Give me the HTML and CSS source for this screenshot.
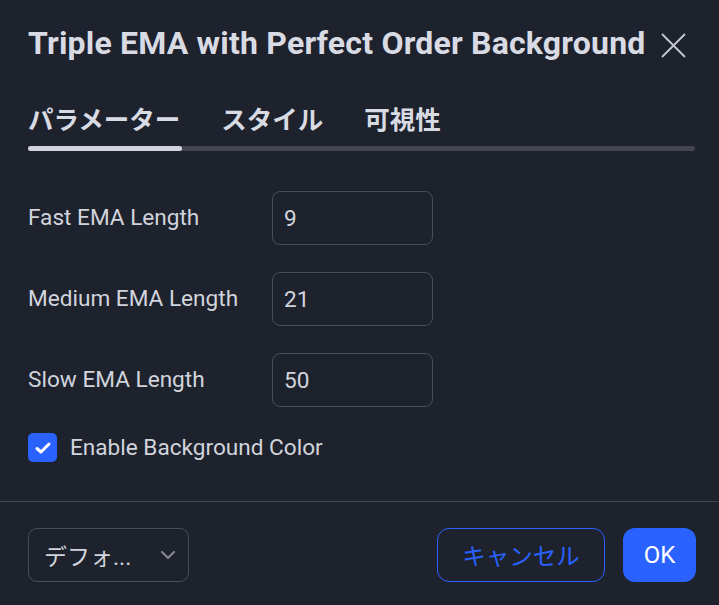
FILE: index.html
```html
<!DOCTYPE html>
<html lang="ja">
<head>
<meta charset="utf-8">
<title>Triple EMA with Perfect Order Background</title>
<link rel="stylesheet" href="styles.css">
</head>
<body>
<div class="dialog">
  <div class="header">
    <div class="title">Triple EMA with Perfect Order Background</div>
    <button class="close" aria-label="閉じる">
      <svg width="25" height="25" viewBox="0 0 25 25"><path d="M1 1L24 24M24 1L1 24" stroke="currentColor" stroke-width="1.8" fill="none"/></svg>
    </button>
  </div>
  <div class="tabs">
    <div class="tab active">パラメーター</div>
    <div class="tab">スタイル</div>
    <div class="tab">可視性</div>
  </div>
  <div class="track"><div class="track-fill"></div></div>
  <div class="fields">
    <label class="label">Fast EMA Length</label>
    <div class="input">9</div>
    <label class="label">Medium EMA Length</label>
    <div class="input">21</div>
    <label class="label">Slow EMA Length</label>
    <div class="input">50</div>
  </div>
  <div class="check-row">
    <span class="checkbox">
      <svg width="18" height="14" viewBox="0 0 18 14"><path d="M3 7.5L7 11L15 3" stroke="#fff" stroke-width="3" fill="none" stroke-linecap="round" stroke-linejoin="round"/></svg>
    </span>
    <span class="check-label">Enable Background Color</span>
  </div>
  <div class="divider"></div>
  <div class="footer">
    <div class="select">
      <span class="select-text">デフォ...</span>
      <svg class="chev" width="14" height="8" viewBox="0 0 14 8"><path d="M1 1L7 7L13 1" stroke="currentColor" stroke-width="2" fill="none" stroke-linecap="round" stroke-linejoin="round"/></svg>
    </div>
    <div class="actions">
      <button class="btn cancel">キャンセル</button>
      <button class="btn ok">OK</button>
    </div>
  </div>
</div>
</body>
</html>
```
FILE: styles.css
```css
* { box-sizing: border-box; }
html, body {
  margin: 0;
  padding: 0;
  background: #1e222d;
}
body {
  font-family: Roboto, "Noto Sans CJK JP", sans-serif;
  color: #d1d4dc;
}
.dialog {
  width: 719px;
  height: 605px;
  background: #1e222d;
}
.header {
  display: flex;
  align-items: center;
  justify-content: space-between;
  padding: 24px 33px 0 28px;
  height: 62px;
}
.title {
  font-size: 32px;
  font-weight: 700;
  line-height: 38px;
  letter-spacing: 0.2px;
  color: #d8dbe3;
  white-space: nowrap;
}
.close {
  background: none;
  border: 0;
  padding: 0;
  margin-top: 4px;
  width: 25px;
  height: 25px;
  color: #c4c7d0;
  display: flex;
}
.tabs {
  display: flex;
  gap: 41px;
  margin-top: 41px;
  padding-left: 28px;
  font-family: "Noto Sans CJK JP", Roboto, sans-serif;
  font-size: 25.5px;
  font-weight: 700;
  line-height: 30px;
  color: #d8dbe3;
}
.track {
  margin: 13px 24px 0 28px;
  height: 5px;
  border-radius: 3px;
  background: #434651;
}
.track-fill {
  width: 154px;
  height: 5px;
  border-radius: 3px;
  background: #d1d4dc;
}
.fields {
  display: grid;
  grid-template-columns: 244px 161px;
  grid-auto-rows: 54px;
  row-gap: 27px;
  padding: 40px 0 0 28px;
  align-items: center;
}
.label {
  font-size: 22.6px;
  line-height: 26px;
}
.input {
  height: 54px;
  border: 1px solid #4a4d58;
  border-radius: 8px;
  font-size: 22.6px;
  padding-left: 11px;
  display: flex;
  align-items: center;
}
.check-row {
  display: flex;
  align-items: center;
  gap: 13px;
  margin: 26px 0 0 28px;
  height: 29px;
}
.checkbox {
  width: 29px;
  height: 29px;
  border-radius: 5px;
  background: #2962ff;
  display: flex;
  align-items: center;
  justify-content: center;
}
.check-label {
  font-size: 22.6px;
}
.divider {
  margin-top: 39px;
  height: 1px;
  background: #434651;
}
.footer {
  display: flex;
  justify-content: space-between;
  align-items: center;
  padding: 26px 23px 0 28px;
}
.select {
  width: 161px;
  height: 54px;
  border: 1px solid #4a4d58;
  border-radius: 9px;
  display: flex;
  align-items: center;
  justify-content: space-between;
  padding: 0 13px 0 15px;
  font-size: 23px;
  color: #d1d4dc;
}
.chev {
  color: #868993;
}
.actions {
  display: flex;
  gap: 18px;
}
.btn {
  height: 54px;
  border-radius: 12px;
  font-family: Roboto, "Noto Sans CJK JP", sans-serif;
  font-size: 23.5px;
  padding: 0;
  display: flex;
  align-items: center;
  justify-content: center;
}
.cancel {
  width: 168px;
  background: transparent;
  border: 1px solid #2962ff;
  color: #2962ff;
}
.ok {
  width: 73px;
  background: #2962ff;
  border: 0;
  color: #ffffff;
  font-size: 24px;
}
```
